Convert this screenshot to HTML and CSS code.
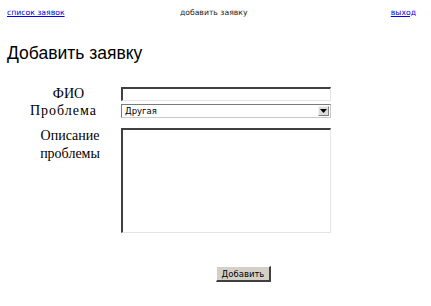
FILE: index.html
```html
<!DOCTYPE html>
<html>
<head>
<meta charset="utf-8">
<link rel="stylesheet" href="styles.css">
</head>
<body>
<div class="topbar">
  <a href="#" class="toplink">список заявок</a>
  <span class="current">добавить заявку</span>
  <a href="#" class="toplink">выход</a>
</div>
<h1 class="title">Добавить заявку</h1>
<form class="form">
  <div class="row row-fio">
    <label class="label">ФИО</label>
    <div class="field input"></div>
  </div>
  <div class="row row-select">
    <label class="label label-wide">Проблема</label>
    <div class="field select">
      <span class="select-text">Другая</span>
      <span class="arrow"><svg width="7" height="4" viewBox="0 0 7 4"><path d="M0 0h7L3.5 4z" fill="#000"/></svg></span>
    </div>
  </div>
  <div class="row row-area">
    <label class="label label-top">Описание<br>проблемы</label>
    <div class="field textarea"></div>
  </div>
  <div class="actions">
    <button type="button" class="btn">Добавить</button>
  </div>
</form>
</body>
</html>
```
FILE: styles.css
```css
html, body { margin: 0; padding: 0; background: #fff; }
body { width: 431px; height: 306px; overflow: hidden; }
.topbar {
  display: flex;
  justify-content: space-between;
  align-items: center;
  padding: 6px 15px 0 7px;
  font-family: "DejaVu Sans", sans-serif;
  font-size: 7.7px;
  height: 12px;
}
.toplink { color: #0000ee; text-decoration: underline; }
.current { color: #222; margin-left: 58px; margin-right: 86px; }
.title {
  font-family: "Liberation Sans", Arial, sans-serif;
  font-weight: normal;
  font-size: 17.5px;
  margin: 24px 0 0 7px;
  line-height: 22px;
  color: #000;
}
.form { margin-top: 23px; }
.row { display: flex; align-items: center; }
.label {
  width: 95px;
  margin-left: 21px;
  margin-right: 5px;
  text-align: center;
  font-family: "Liberation Serif", "Times New Roman", serif;
  font-size: 14px;
  line-height: 18px;
  color: #000;
}
.label-wide { letter-spacing: 1px; text-indent: -10px; }
.row-fio { height: 14px; margin-top: 0; }
.row-select { height: 14px; margin-top: 3px; }
.row-area { align-items: flex-start; margin-top: 10px; }
.label-top { margin-top: -1px; padding-left: 3px; box-sizing: border-box; }
.field { width: 210px; box-sizing: border-box; background: #fff; }
.input {
  height: 14px;
  border-top: 2px solid #404040;
  border-left: 2px solid #404040;
  border-right: 1px solid #e4e4e4;
  border-bottom: 1px solid #e4e4e4;
}
.select {
  height: 14px;
  border: 1px solid #7a7a7a;
  border-right-color: #c8c8c8;
  border-bottom-color: #c8c8c8;
  display: flex;
  align-items: center;
  justify-content: space-between;
  padding-left: 3px;
}
.select-text {
  font-family: "DejaVu Sans", sans-serif;
  font-size: 8.5px;
  color: #000;
}
.arrow {
  width: 11px;
  height: 10px;
  margin-right: 1px;
  background: #dcdcdc;
  border: 1px solid #f4f4f4;
  border-right-color: #808080;
  border-bottom-color: #808080;
  box-sizing: border-box;
  display: flex;
  align-items: center;
  justify-content: center;
}
.textarea {
  height: 105px;
  border-top: 2px solid #404040;
  border-left: 2px solid #404040;
  border-right: 1px solid #e4e4e4;
  border-bottom: 1px solid #e4e4e4;
}
.actions { display: flex; margin-top: 33px; padding-left: 216px; }
.btn {
  width: 55px;
  height: 16px;
  padding: 0;
  background: #d4d0c8;
  border: 1px solid #fff;
  border-right: 2px solid #404040;
  border-bottom: 2px solid #404040;
  font-family: "DejaVu Sans", sans-serif;
  font-size: 8.5px;
  color: #000;
}
```
